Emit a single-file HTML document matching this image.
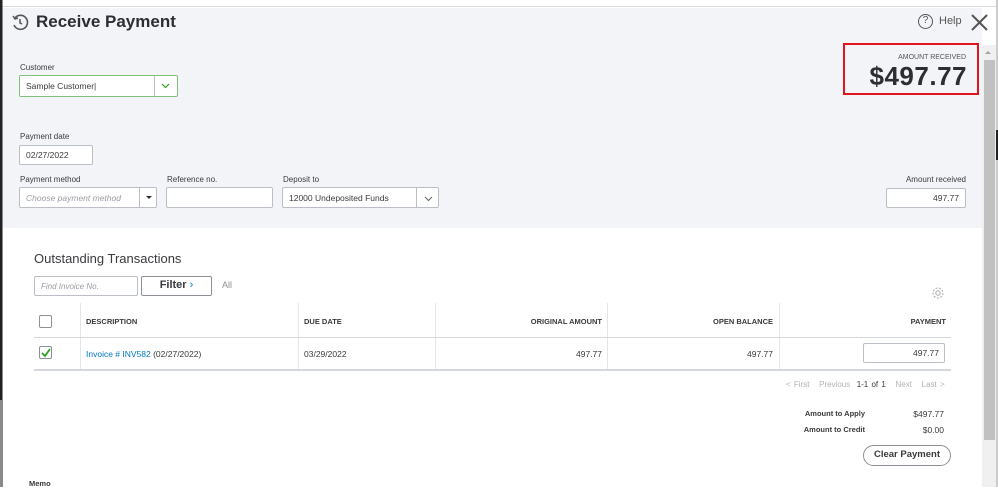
<!DOCTYPE html>
<html><head><meta charset="utf-8"><style>
*{margin:0;padding:0;box-sizing:border-box}
body{width:998px;height:487px;overflow:hidden;background:#fff;font-family:"Liberation Sans",Arial,sans-serif;color:#393a3d;position:relative}
.a{position:absolute}
.lbl{font-size:8px;color:#393a3d}
.inp{position:absolute;background:#fff;border:1px solid #babec5;border-radius:2px;font-size:8.5px;display:flex;align-items:center;padding-left:6px}
.th{font-size:7.5px;font-weight:bold;color:#393a3d;position:absolute;top:317px}
.td{font-size:8.5px;position:absolute;top:349px}
.vl{position:absolute;width:1px;background:#e3e5e8}
</style></head><body>
<div class="a" style="left:0;top:0;width:998px;height:7px;background:#fff;border-bottom:1px solid #d9d9d9"></div>
<div class="a" style="left:0;top:8px;width:982px;height:220px;background:#f3f4f8"></div>
<div class="a" style="left:0;top:0;width:3px;height:487px;background:#8a8a8a"></div>
<div class="a" style="left:0;top:0;width:2px;height:400px;background:#222"></div>
<svg class="a" style="left:11px;top:13px" width="19" height="18" viewBox="0 0 19 18"><path d="M4 5a7 7 0 1 1 -1 7" fill="none" stroke="#555" stroke-width="1.6"/><path d="M2 3l2 3 3-1" fill="none" stroke="#555" stroke-width="1.5"/><path d="M9 6v4l2 1" fill="none" stroke="#555" stroke-width="1.5"/></svg>
<div class="a" style="left:36px;top:12px;font-size:17px;font-weight:bold;color:#2d2e31">Receive Payment</div>
<div class="a" style="left:918px;top:14px;width:15px;height:15px;border:1.5px solid #555;border-radius:50%;font-size:10px;text-align:center;line-height:12px;color:#555">?</div>
<div class="a" style="left:939px;top:15px;font-size:11px;color:#555">Help</div>
<svg class="a" style="left:971px;top:14px" width="17" height="17"><path d="M1 1L16 16M16 1L1 16" stroke="#555" stroke-width="2"/></svg>
<div class="a" style="left:843px;top:43px;width:136px;height:52px;border:2px solid #e0141e"></div>
<div class="a" style="left:850px;top:54px;width:116px;text-align:right;font-size:7px;color:#555">AMOUNT RECEIVED</div>
<div class="a" style="left:830px;top:61px;width:137px;text-align:right;font-size:26px;font-weight:bold;color:#2d2e31;letter-spacing:0.5px">$497.77</div>
<div class="a lbl" style="left:20px;top:63px">Customer</div>
<div class="inp" style="left:19px;top:75px;width:159px;height:22px;border:1.5px solid #7ec27a">Sample Customer|</div>
<div class="a" style="left:154px;top:76px;width:1px;height:20px;background:#babec5"></div>
<svg class="a" style="left:161px;top:83px" width="9" height="6"><path d="M1 1l3.5 3.5L8 1" fill="none" stroke="#2ca01c" stroke-width="1.2"/></svg>
<div class="a lbl" style="left:20px;top:132px">Payment date</div>
<div class="inp" style="left:19px;top:145px;width:74px;height:20px">02/27/2022</div>
<div class="a lbl" style="left:20px;top:175px">Payment method</div>
<div class="inp" style="left:19px;top:187px;width:138px;height:21px;color:#9a9ca1;font-style:italic">Choose payment method</div>
<div class="a" style="left:139px;top:188px;width:1px;height:19px;background:#babec5"></div>
<div class="a" style="left:146px;top:196px;border-left:3px solid transparent;border-right:3px solid transparent;border-top:3px solid #333"></div>
<div class="a lbl" style="left:167px;top:175px">Reference no.</div>
<div class="inp" style="left:166px;top:187px;width:107px;height:21px"></div>
<div class="a lbl" style="left:283px;top:175px">Deposit to</div>
<div class="inp" style="left:282px;top:187px;width:157px;height:21px">12000 Undeposited Funds</div>
<div class="a" style="left:416px;top:188px;width:1px;height:19px;background:#babec5"></div>
<svg class="a" style="left:424px;top:196px" width="9" height="6"><path d="M1 1l3.5 3.5L8 1" fill="none" stroke="#666" stroke-width="1"/></svg>
<div class="a lbl" style="left:880px;top:175px;width:86px;text-align:right">Amount received</div>
<div class="inp" style="left:886px;top:188px;width:80px;height:20px;justify-content:flex-end;padding-right:6px">497.77</div>
<div class="a" style="left:34px;top:251px;font-size:13px;color:#393a3d">Outstanding Transactions</div>
<div class="inp" style="left:34px;top:276px;width:104px;height:20px;color:#9a9ca1;font-style:italic;font-size:8px">Find Invoice No.</div>
<div class="a" style="left:141px;top:276px;width:71px;height:20px;border:1.5px solid #8d9096;border-radius:2px;font-size:11px;font-weight:bold;text-align:center;line-height:17px">Filter <span style="color:#0077c5;font-weight:normal">&#8250;</span></div>
<div class="a" style="left:222px;top:280px;font-size:9px;color:#8d9096">All</div>
<svg class="a" style="left:931px;top:286px" width="14" height="14" viewBox="0 0 14 14"><circle cx="7" cy="7" r="2.2" fill="none" stroke="#aaa"/><circle cx="7" cy="7" r="5" fill="none" stroke="#aaa" stroke-dasharray="2 1.5"/></svg>
<div class="vl" style="left:80px;top:303px;height:67px"></div>
<div class="vl" style="left:298px;top:303px;height:67px"></div>
<div class="vl" style="left:435px;top:303px;height:67px"></div>
<div class="vl" style="left:607px;top:303px;height:67px"></div>
<div class="vl" style="left:779px;top:303px;height:67px"></div>
<div class="a" style="left:34px;top:337px;width:917px;height:1px;background:#d4d7dc"></div>
<div class="a" style="left:34px;top:369px;width:917px;height:2px;background:#d4d7dc"></div>
<div class="a" style="left:39px;top:315px;width:13px;height:13px;border:1px solid #8d9096;border-radius:2px;background:#fff"></div>
<div class="a" style="left:39px;top:346px;width:13px;height:13px;border:1px solid #8d9096;border-radius:2px;background:#fff"></div>
<svg class="a" style="left:40px;top:347px" width="12" height="12"><path d="M2 6l3 3 5-7" fill="none" stroke="#2ca01c" stroke-width="1.8"/></svg>
<div class="th" style="left:86px">DESCRIPTION</div>
<div class="th" style="left:304px">DUE DATE</div>
<div class="th" style="left:500px;width:102px;text-align:right">ORIGINAL AMOUNT</div>
<div class="th" style="left:660px;width:113px;text-align:right">OPEN BALANCE</div>
<div class="th" style="left:850px;width:96px;text-align:right">PAYMENT</div>
<div class="td" style="left:86px"><span style="color:#0077c5">Invoice # INV582</span> (02/27/2022)</div>
<div class="td" style="left:304px">03/29/2022</div>
<div class="td" style="left:500px;width:102px;text-align:right">497.77</div>
<div class="td" style="left:660px;width:113px;text-align:right">497.77</div>
<div class="inp" style="left:863px;top:343px;width:82px;height:20px;justify-content:flex-end;padding-right:5px">497.77</div>
<div class="a" style="left:786px;top:380px;font-size:8px;color:#b0b2b6;word-spacing:1px">&lt; First &nbsp; Previous &nbsp;<span style="color:#393a3d">1-1 of 1</span>&nbsp;&nbsp; Next &nbsp; Last &gt;</div>
<div class="a" style="left:790px;top:409px;width:75px;text-align:right;font-size:7.5px;font-weight:bold">Amount to Apply</div>
<div class="a" style="left:880px;top:409px;width:64px;text-align:right;font-size:8.5px">$497.77</div>
<div class="a" style="left:790px;top:425px;width:75px;text-align:right;font-size:7.5px;font-weight:bold">Amount to Credit</div>
<div class="a" style="left:880px;top:425px;width:64px;text-align:right;font-size:8.5px">$0.00</div>
<div class="a" style="left:863px;top:445px;width:88px;height:21px;border:1.5px solid #8d9096;border-radius:11px;font-size:9.5px;text-align:center;line-height:18px;font-weight:bold;color:#393a3d">Clear Payment</div>
<div class="a" style="left:29px;top:479px;font-size:7.5px;font-weight:bold">Memo</div>
<div class="a" style="left:982px;top:45px;width:14px;height:442px;background:#f0f0f0"></div>
<div class="a" style="left:985px;top:51px;border-left:3px solid transparent;border-right:3px solid transparent;border-bottom:3px solid #a3a3a3"></div>
<div class="a" style="left:984px;top:60px;width:11px;height:380px;background:#c1c1c1"></div>
<div class="a" style="left:996px;top:0;width:2px;height:487px;background:#ccc"></div>
<div class="a" style="left:996px;top:130px;width:2px;height:30px;background:#222"></div>
</body></html>
